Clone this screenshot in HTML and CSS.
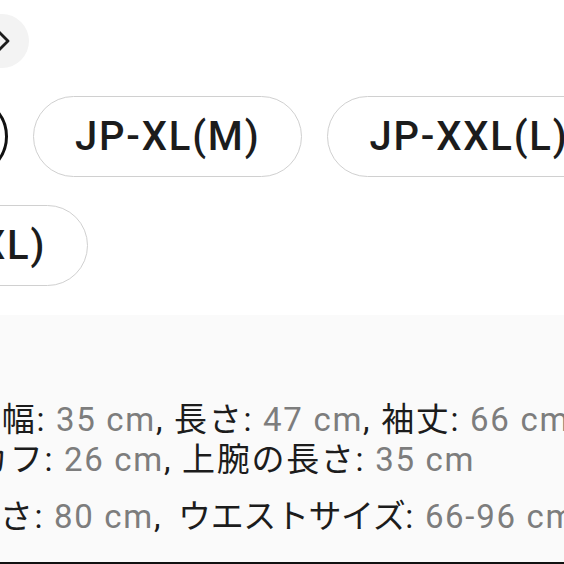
FILE: index.html
```html
<!DOCTYPE html>
<html lang="ja">
<head>
<meta charset="utf-8">
<title>サイズ選択</title>
<link rel="stylesheet" href="styles.css">
</head>
<body>
  <div class="top">
    <button class="next-btn" aria-label="次へ">
      <svg width="54" height="54" viewBox="0 0 54 54"><path d="M23 17 L33 27 L23 37" fill="none" stroke="#1c1c1c" stroke-width="2.8" stroke-linecap="round" stroke-linejoin="round"/></svg>
    </button>
  </div>
  <div class="sizes">
    <div class="chip selected">JP-L(S)</div>
    <div class="chip">JP-XL(M)</div>
    <div class="chip">JP-XXL(L)</div>
    <div class="chip">JP-XXXL(XL)</div>
  </div>
  <div class="specs">
    <p class="spec-group spec-top">肩幅: <span class="value">35 cm</span>, 長さ: <span class="value">47 cm</span>, 袖丈: <span class="value">66 cm</span>,<br>カフ: <span class="value">26 cm</span>, 上腕の長さ: <span class="value">35 cm</span></p>
    <p class="spec-group spec-bottom">長さ: <span class="value">80 cm</span>, <span class="kana">ウエストサイズ</span>: <span class="value">66-96 cm</span></p>
  </div>
  <div class="edge"></div>
</body>
</html>
```

FILE: styles.css
```css
* { box-sizing: border-box; margin: 0; padding: 0; }
html, body { width: 564px; height: 564px; overflow: hidden; }
body {
  background: #ffffff;
  font-family: Roboto, "Noto Sans CJK JP", sans-serif;
  color: #1c1c1c;
  display: flex;
  flex-direction: column;
}
.top { height: 96px; padding-top: 14px; flex: none; }
.next-btn {
  width: 54px; height: 54px;
  border: none; border-radius: 50%;
  background: #f3f3f3;
  margin-left: -25px;
  display: flex; align-items: center; justify-content: center;
}
.next-btn svg { display: block; }
.sizes {
  flex: none;
  display: flex; flex-wrap: wrap;
  gap: 28px 25px;
  width: 900px;
  margin-left: -249px;
  padding-bottom: 29px;
}
.chip {
  min-width: 257px; height: 81px;
  padding: 0 41px;
  border: 1.5px solid #d0d0d0;
  border-radius: 41px;
  background: #fff;
  display: flex; align-items: center; justify-content: center;
  font-size: 40px; font-weight: 500; letter-spacing: 1.8px;
  white-space: nowrap;
  color: #1c1c1c;
}
.chip.selected { border: 3px solid #111; }
.specs {
  flex: 1;
  background: #fafafa;
  padding-top: 85px;
  font-size: 33px; line-height: 40px; letter-spacing: 1.7px;
  white-space: nowrap;
}
.spec-group + .spec-group { margin-top: 17px; }
.spec-top { margin-left: -25px; text-indent: -8px; }
.spec-bottom { margin-left: -35px; }
.kana { margin-left: 6px; letter-spacing: -0.4px; }
.value { color: #7d7d7d; }
.edge { flex: none; height: 2px; background: #111; }
```
